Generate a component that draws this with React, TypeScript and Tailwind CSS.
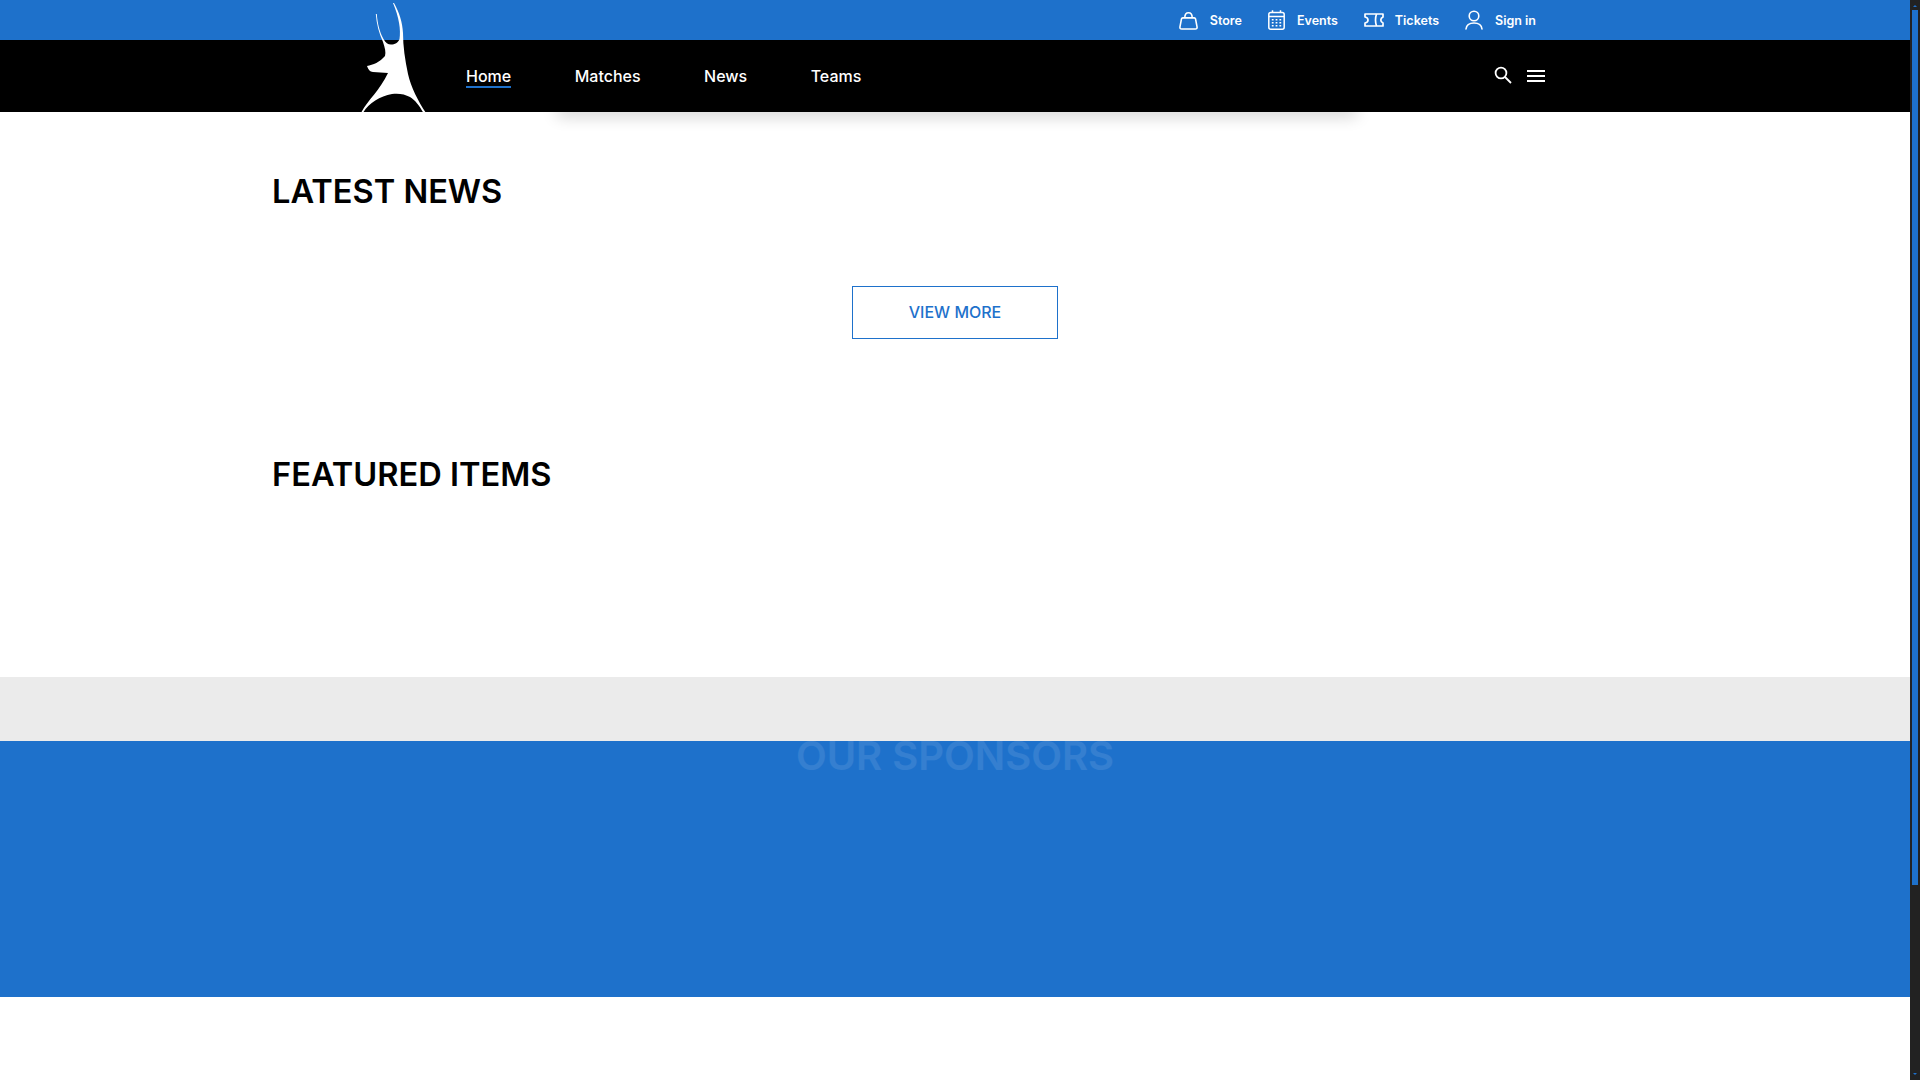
import React from "react";

const font = { fontFamily: "Inter, 'Liberation Sans', sans-serif" };

function Bag() {
  return (
    <svg width="19" height="19" viewBox="0 0 18 18" fill="none" stroke="white" strokeWidth="1.5" strokeLinejoin="round">
      <path d="M3.6 6.5 H14.4 Q15.4 6.5 15.7 7.6 L17.1 15 Q17.4 17 15.4 17 H2.6 Q0.6 17 0.9 15 L2.3 7.6 Q2.6 6.5 3.6 6.5 Z" />
      <path d="M5.5 6.5 C5.5 0 12.5 0 12.5 6.5" />
    </svg>
  );
}
function Calendar() {
  return (
    <svg width="17" height="20" viewBox="0 0 17 20" fill="none" stroke="white" strokeWidth="1.5">
      <rect x="0.8" y="2.5" width="15.4" height="16.7" rx="2" />
      <path d="M0.8 6.5 H16.2 M4.5 0.3 V3 M12.5 0.3 V3" />
      <path d="M3.8 9.7h1.8M7.6 9.7h1.8M11.4 9.7h1.8M3.8 12.7h1.8M7.6 12.7h1.8M11.4 12.7h1.8M3.8 15.7h1.8M7.6 15.7h1.8M11.4 15.7h1.8" strokeWidth="1.4" />
    </svg>
  );
}
function Ticket() {
  return (
    <svg width="20" height="14" viewBox="0 0 20 14" fill="none" stroke="white" strokeWidth="1.7" strokeLinejoin="round">
      <path d="M1 1 H19 V4 Q16.8 5 16.8 7 Q16.8 9 19 10 V13 H1 V10 Q4 9.5 4 7 Q4 4.5 1 4 Z" />
      <path d="M12.5 1 Q10.5 7 12.5 13" />
    </svg>
  );
}
function User() {
  return (
    <svg width="18" height="20" viewBox="0 0 18 20" fill="none" stroke="white" strokeWidth="1.6" strokeLinecap="round">
      <circle cx="9" cy="6" r="4.8" />
      <path d="M1 19 C1.5 14.5 5 13 9 13 C13 13 16.5 14.5 17 19" />
    </svg>
  );
}

const links = [
  { label: "Store", icon: <Bag />, cls: "mt-[1px]" },
  { label: "Events", icon: <Calendar />, cls: "mt-[1px]" },
  { label: "Tickets", icon: <Ticket />, cls: "mt-[1px] -ml-px" },
  { label: "Sign in", icon: <User />, cls: "mt-[1px]" },
];

export default function App() {
  return (
    <div className="flex h-screen w-screen overflow-hidden bg-white" style={font}>
      <div className="relative flex w-[1910px] flex-col">
        <header className="relative z-20 shrink-0">
          <div className="flex h-10 items-center justify-end gap-[26px] bg-[#1e71cb] pr-[374px]">
            {links.map((l) => (
              <a key={l.label} className="flex items-center gap-3 text-[12.5px] font-semibold leading-[16px] text-white">
                {l.icon}
                <span className={l.cls}>{l.label}</span>
              </a>
            ))}
          </div>
          <nav className="flex h-[72px] items-center justify-between bg-black pl-[466px] pr-[365px] text-white">
            <ul className="mt-[2px] flex gap-[63.5px] text-base font-medium">
              <li className="border-b-2 border-[#1e71cb] leading-[20px]">Home</li>
              <li className="mb-[2px] leading-[20px]">Matches</li>
              <li className="mb-[2px] leading-[20px]">News</li>
              <li className="mb-[2px] leading-[20px]">Teams</li>
            </ul>
            <div className="flex items-center gap-[15px]">
              <svg className="mb-[2px]" width="18" height="18" viewBox="0 0 18 18" fill="none" stroke="white" strokeWidth="1.8">
                <circle cx="7" cy="7" r="5.4" />
                <path d="M11 11 L17 17" />
              </svg>
              <svg width="18" height="14" viewBox="0 0 18 14" fill="none" stroke="white" strokeWidth="1.8">
                <path d="M0 2 H18 M0 7 H18 M0 12 H18" />
              </svg>
            </div>
          </nav>
          <svg className="absolute left-[360px] top-0" width="70" height="113" viewBox="0 0 70 113" fill="white">
            <path d="M34 3 C39 12 42.5 22 43 33 C43 46 45 60 48 74 C51 87 58 101 66 113 L63.5 113 C59 105 55 100 50 97 C45 94 38 93 32 94 C20 96 9 103 3.5 112 L1.5 112 C8 100 20 90 28 73 L13 72 C10 72 8 69 7 66 C13 65 20 62 25 56 C26 52 25 48 23 42 C19 33 16.5 24 15.8 14 L16.8 14 C17.5 24 20 33 23.5 39 C25.5 43 28 44.5 31 44.5 C35 44.5 38 43 39.5 39 C41 30 39 17 33 3 Z" />
          </svg>
          <div className="absolute left-[557px] top-[100px] -z-10 h-[12px] w-[800px] shadow-[0_4px_16px_rgba(0,0,0,0.2)]" />
        </header>

        <main className="flex-1 pl-[272px]">
          <section className="h-[565px]">
            <h2 className="pt-[57px] text-[32.6px] font-semibold leading-[44px] text-black">LATEST NEWS</h2>
            <div className="mt-[73px] flex justify-center pr-[272px]">
              <button className="h-[53px] w-[206px] border-[1.5px] border-[#1e71cb] pb-[2px] text-base font-medium text-[#1e71cb]">
                VIEW MORE
              </button>
            </div>
            <h2 className="pt-[113px] text-[32.6px] font-semibold leading-[44px] text-black">FEATURED ITEMS</h2>
          </section>
        </main>

        <div className="absolute left-0 right-0 top-[677px] h-[64px] bg-[#ebebeb]" />
        <section className="absolute left-0 right-0 top-[741px] h-[256px] overflow-hidden bg-[#1e71cb]">
          <h2 className="-mt-[10px] text-center text-[40px] font-semibold leading-[50px] text-white/10">OUR SPONSORS</h2>
        </section>
      </div>

      <div className="flex w-[10px] flex-col items-center bg-[#222222]">
        <div className="relative h-[10px] w-full">
          <div className="absolute left-[3px] top-[5px] h-0 w-0 border-x-[2px] border-b-[2px] border-x-transparent border-b-[#1e71cb]" />
        </div>
        <div className="h-[875px] w-[6px] bg-[#1e71cb]" />
        <div className="relative w-full flex-1">
          <div className="absolute left-[3px] top-[188px] h-0 w-0 border-x-[2px] border-t-[2px] border-x-transparent border-t-[#1e71cb]" />
        </div>
      </div>
    </div>
  );
}
